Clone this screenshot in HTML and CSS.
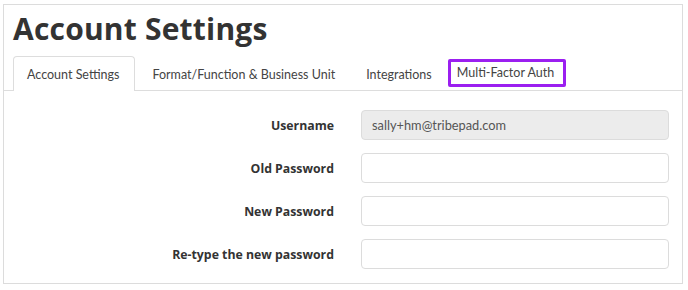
FILE: index.html
```html
<!DOCTYPE html>
<html lang="en">
<head>
    <meta charset="UTF-8">
    <title>Account Settings</title>
    <link rel="stylesheet" href="styles.css">
</head>
<body>
    <div class="frame">
        <h1 class="page-title">Account Settings</h1>

        <!-- Tabs -->
        <div class="tabs">
            <div class="tab active">Account Settings</div>
            <div class="tab">Format/Function &amp; Business Unit</div>
            <div class="tab">Integrations</div>
            <div class="tab highlighted">Multi-Factor Auth</div>
        </div>

        <!-- Password form -->
        <form class="settings-form">
            <label for="username">Username</label>
            <input type="text" id="username" class="readonly" value="sally+hm@tribepad.com" readonly>

            <label for="old-password">Old Password</label>
            <input type="password" id="old-password">

            <label for="new-password">New Password</label>
            <input type="password" id="new-password">

            <label for="retype-password">Re-type the new password</label>
            <input type="password" id="retype-password">
        </form>
    </div>
</body>
</html>
```

FILE: styles.css
```css
* {
    margin: 0;
    padding: 0;
    box-sizing: border-box;
}
body {
    font-family: "Lato", "Open Sans", sans-serif;
    background: #fff;
    color: #333;
    padding: 4px 5px 6px 3px;
}
.frame {
    border: 1px solid #dcdcdc;
    height: 280px;
}
.page-title {
    font-family: "Open Sans", "Lato", sans-serif;
    font-size: 30px;
    font-weight: 700;
    color: #333;
    line-height: 36px;
    padding: 6px 0 0 9px;
    letter-spacing: 0.2px;
}

/* Tabs */
.tabs {
    display: flex;
    margin-top: 10px;
    padding-left: 9px;
    border-bottom: 1px solid #ddd;
    height: 34px;
    align-items: flex-end;
}
.tab {
    font-size: 12.5px;
    color: #444;
    padding: 2px 15px 0 14px;
    height: 34px;
    line-height: 32px;
    border: 1px solid transparent;
    border-bottom: none;
}
.tab.active {
    border-color: #ddd;
    border-radius: 4px 4px 0 0;
    background: #fff;
    height: 35px;
    margin-bottom: -1px;
    padding: 2px 15px 0 13px;
    margin-right: 2px;
}
.tab.highlighted {
    border: 3px solid #9b1ff0;
    border-radius: 2px;
    height: 28px;
    line-height: 22px;
    margin-bottom: 3px;
    padding: 0 9px 0 6px;
}

/* Form */
.settings-form {
    display: grid;
    grid-template-columns: 330px 308px;
    column-gap: 27px;
    row-gap: 13px;
    margin-top: 19px;
}
.settings-form label {
    font-family: "Open Sans", "Lato", sans-serif;
    font-size: 12.3px;
    font-weight: 700;
    color: #333;
    text-align: right;
    align-self: center;
}
.settings-form input {
    height: 30px;
    border: 1px solid #dcdcdc;
    border-radius: 4px;
    font-family: inherit;
    font-size: 12.8px;
    color: #555;
    padding: 0 10px;
    background: #fff;
}
.settings-form input.readonly {
    background: #ececec;
}
```
